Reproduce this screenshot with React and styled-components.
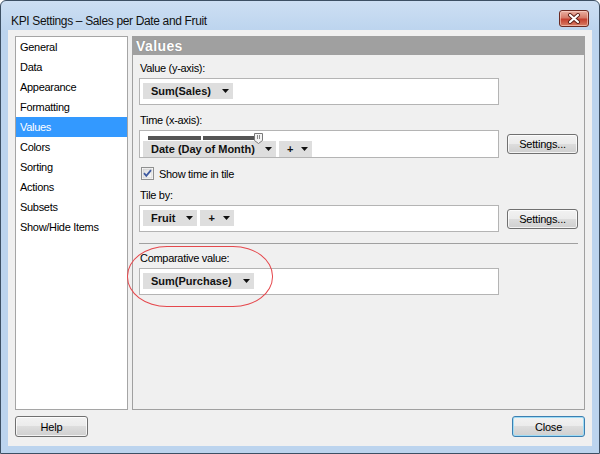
import React from 'react';
import styled, { createGlobalStyle } from 'styled-components';

const GlobalStyle = createGlobalStyle`
  html, body {
    margin: 0;
    padding: 0;
    background: #ffffff;
  }
  body {
    width: 600px;
    height: 454px;
    overflow: hidden;
    font-family: "Liberation Sans", Arial, sans-serif;
    font-size: 11px;
    color: #000;
  }
  * { box-sizing: border-box; }
`;

const Window = styled.div`
  width: 600px;
  height: 454px;
  border: 1px solid #3d5064;
  border-radius: 6px 6px 0 0;
  background: linear-gradient(#cddff3 0px, #bcd4ee 30px, #bcd4ee 100%);
  padding: 0 7px 7px;
  display: flex;
  flex-direction: column;
`;

const TitleBar = styled.div`
  height: 29px;
  display: flex;
  justify-content: space-between;
  align-items: flex-start;
`;

const Title = styled.div`
  margin: 12px 0 0 3px;
  font-size: 12px;
  line-height: 16px;
  letter-spacing: -0.35px;
  color: #111;
`;

const CloseX = styled.div`
  width: 30px;
  height: 17px;
  margin: 9px 3px 0 0;
  border: 1px solid #6b2a22;
  border-radius: 3px;
  background: linear-gradient(#eab0a2 0%, #d67b69 45%, #c4402f 55%, #d87e66 100%);
  box-shadow: inset 0 0 0 1px rgba(255, 220, 210, 0.55);
  display: flex;
  align-items: center;
  justify-content: center;
`;

const Client = styled.div`
  flex: 1;
  background: #f0f0f0;
  padding: 6px 7px 0;
  display: flex;
  flex-direction: column;
`;

const Main = styled.div`
  height: 374px;
  display: flex;
  gap: 4px;
`;

const NavList = styled.ul`
  width: 114px;
  margin: 0;
  padding: 0;
  list-style: none;
  background: #fff;
  border: 1px solid #a5a5a5;
`;

const NavItem = styled.li`
  height: 20px;
  line-height: 20px;
  padding-left: 4px;
  letter-spacing: -0.3px;
  background: ${(p) => (p.$active ? '#3399ff' : 'transparent')};
  color: ${(p) => (p.$active ? '#fff' : '#000')};
`;

const Panel = styled.div`
  flex: 1;
  border: 1px solid #a0a0a0;
  display: flex;
  flex-direction: column;
`;

const PanelHeader = styled.div`
  height: 18px;
  background: #a0a0a0;
  color: #fff;
  font-weight: bold;
  font-size: 14px;
  line-height: 18px;
  letter-spacing: 0.4px;
  padding-left: 3px;
  text-shadow: 0 0 1px #7a7a7a;
`;

const PanelBody = styled.div`
  position: relative;
  padding: 6px 6px 0;
  display: flex;
  flex-direction: column;
`;

const Field = styled.div`
  margin-top: ${(p) => p.$top || 0}px;
`;

const Label = styled.div`
  height: 14px;
  line-height: 14px;
  margin: 0 0 3px 1px;
  letter-spacing: -0.3px;
`;

const FieldRow = styled.div`
  display: flex;
  align-items: center;
  gap: 8px;
`;

const Box = styled.div`
  width: 360px;
  height: ${(p) => p.$h || 27}px;
  background: #fff;
  border: 1px solid #b4b4b4;
  padding: ${(p) => p.$pad || '4px 3px 5px'};
  display: flex;
  flex-direction: column;
`;

const Chips = styled.div`
  display: flex;
  gap: 3px;
`;

const Chip = styled.div`
  height: 16px;
  background: #dedede;
  display: flex;
  align-items: center;
  padding: 0 4px 0 8px;
  font-weight: bold;
  font-size: 11px;
  color: #111;
`;

const ChipArrow = styled.svg`
  margin-left: ${(p) => p.$gap || 11}px;
  flex: none;
`;

const Slider = styled.div`
  position: relative;
  height: 10px;
  margin-left: 4px;
  display: flex;
  gap: 2px;
  padding-top: 5px;
`;

const SliderBar = styled.div`
  width: ${(p) => p.$w}px;
  height: 4px;
  background: #555;
`;

const SliderThumb = styled.svg`
  position: absolute;
  left: 106px;
  top: 2px;
`;

const Button = styled.button`
  width: ${(p) => p.$w || 71}px;
  height: ${(p) => p.$h || 20}px;
  padding: 0;
  font-family: "Liberation Sans", Arial, sans-serif;
  font-size: 11px;
  letter-spacing: -0.2px;
  color: #000;
  border: 1px solid ${(p) => (p.$default ? '#3c7fb1' : '#707070')};
  border-radius: 3px;
  background: linear-gradient(#f2f2f2 0%, #ebebeb 49%, #dddddd 50%, #cfcfcf 100%);
  box-shadow: inset 0 0 0 1px ${(p) => (p.$default ? '#9fdcf5' : 'rgba(255,255,255,0.75)')};
`;

const CheckRow = styled.label`
  margin-top: 9px;
  height: 13px;
  display: flex;
  align-items: center;
  gap: 5px;
  padding-left: 2px;
  letter-spacing: -0.3px;
`;

const Separator = styled.div`
  margin-top: 11px;
  height: 1px;
  background: #a0a0a0;
`;

const Annotation = styled.div`
  position: absolute;
  left: -6px;
  top: 191px;
  width: 146px;
  height: 61px;
  border: 1px solid #e5484d;
  border-radius: 40px / 30px;
  pointer-events: none;
`;

const Footer = styled.div`
  margin-top: 6px;
  display: flex;
  justify-content: space-between;
`;

const Arrow = ({ gap }) => (
  <ChipArrow $gap={gap} width="7" height="4" viewBox="0 0 7 4">
    <path d="M0 0h7L3.5 4z" fill="#111" />
  </ChipArrow>
);

const CheckBox = () => (
  <svg width="13" height="13" viewBox="0 0 13 13">
    <defs>
      <linearGradient id="cbg" x1="0" y1="0" x2="1" y2="1">
        <stop offset="0" stopColor="#dcdcdc" />
        <stop offset="1" stopColor="#fbfbfb" />
      </linearGradient>
    </defs>
    <rect x="0.5" y="0.5" width="12" height="12" fill="#fff" stroke="#8e8f8f" />
    <rect x="2" y="2" width="9" height="9" fill="url(#cbg)" stroke="#c4c4c4" strokeWidth="0.6" />
    <path d="M3 6.2 5.3 8.8 10 3.2" fill="none" stroke="#3e5aa0" strokeWidth="1.8" />
  </svg>
);

const navItems = [
  'General', 'Data', 'Appearance', 'Formatting', 'Values',
  'Colors', 'Sorting', 'Actions', 'Subsets', 'Show/Hide Items',
];

export default function App() {
  return (
    <>
      <GlobalStyle />
      <Window>
        <TitleBar>
          <Title>KPI Settings – Sales per Date and Fruit</Title>
          <CloseX>
            <svg width="14" height="11" viewBox="0 0 14 11">
              <path d="M3 2 11 9M11 2 3 9" stroke="#5a1e16" strokeWidth="4" strokeLinecap="round" />
              <path d="M3 2 11 9M11 2 3 9" stroke="#fff" strokeWidth="2.2" strokeLinecap="round" />
            </svg>
          </CloseX>
        </TitleBar>
        <Client>
          <Main>
            <NavList>
              {navItems.map((n) => (
                <NavItem key={n} $active={n === 'Values'}>{n}</NavItem>
              ))}
            </NavList>
            <Panel>
              <PanelHeader>Values</PanelHeader>
              <PanelBody>
                <Field>
                  <Label>Value (y-axis):</Label>
                  <FieldRow>
                    <Box>
                      <Chips>
                        <Chip>Sum(Sales)<Arrow gap={11} /></Chip>
                      </Chips>
                    </Box>
                  </FieldRow>
                </Field>

                <Field $top={8}>
                  <Label>Time (x-axis):</Label>
                  <FieldRow>
                    <Box $h={28} $pad="0 3px 0 4px">
                      <Slider>
                        <SliderBar $w={53} />
                        <SliderBar $w={52} />
                        <SliderThumb width="9" height="11" viewBox="0 0 9 11">
                          <path d="M0.5 0.5h8v7L4.5 10.5 0.5 7.5z" fill="#f4f4f4" stroke="#7a7a7a" />
                          <path d="M3.5 2v4M5.5 2v4" stroke="#8a8a8a" />
                        </SliderThumb>
                      </Slider>
                      <Chips>
                        <Chip style={{ marginLeft: -1 }}>Date (Day of Month)<Arrow gap={10} /></Chip>
                        <Chip>+<Arrow gap={8} /></Chip>
                      </Chips>
                    </Box>
                    <Button>Settings...</Button>
                  </FieldRow>
                </Field>

                <CheckRow>
                  <CheckBox />
                  Show time in tile
                </CheckRow>

                <Field $top={8}>
                  <Label>Tile by:</Label>
                  <FieldRow>
                    <Box>
                      <Chips>
                        <Chip>Fruit<Arrow gap={11} /></Chip>
                        <Chip>+<Arrow gap={8} /></Chip>
                      </Chips>
                    </Box>
                    <Button>Settings...</Button>
                  </FieldRow>
                </Field>

                <Separator />

                <Field $top={7}>
                  <Label>Comparative value:</Label>
                  <FieldRow>
                    <Box>
                      <Chips>
                        <Chip>Sum(Purchase)<Arrow gap={11} /></Chip>
                      </Chips>
                    </Box>
                  </FieldRow>
                </Field>

                <Annotation />
              </PanelBody>
            </Panel>
          </Main>
          <Footer>
            <Button $w={73} $h={21}>Help</Button>
            <Button $w={73} $h={21} $default>Close</Button>
          </Footer>
        </Client>
      </Window>
    </>
  );
}
